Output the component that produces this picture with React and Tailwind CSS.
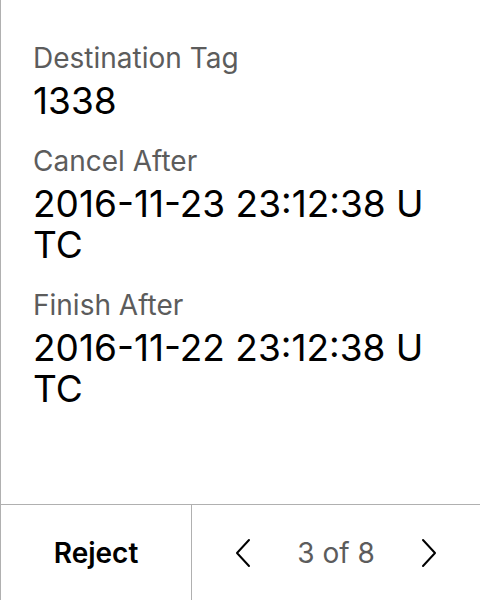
const fields = [
  { label: 'Destination Tag', value: '1338' },
  { label: 'Cancel After', value: '2016-11-23 23:12:38 UTC' },
  { label: 'Finish After', value: '2016-11-22 23:12:38 UTC' },
];

function Chevron({ dir }) {
  return (
    <svg width="18" height="32" viewBox="0 0 18 32" fill="none" stroke="#000" strokeWidth="2" strokeLinecap="round" strokeLinejoin="round">
      {dir === 'left' ? <path d="M15 3 L3 16 L15 29" /> : <path d="M3 3 L15 16 L3 29" />}
    </svg>
  );
}

export default function App() {
  return (
    <div className="flex h-[600px] w-[480px] flex-col border-l border-[#b0b0b0] bg-white font-['Inter',sans-serif]">
      <div className="flex-1 pl-8 pr-10 pt-[42px]">
        {fields.map((f) => (
          <div key={f.label} className="mb-[24px]">
            <div className="text-[28px] leading-[32px] text-[#5c5c5c]">{f.label}</div>
            <div className="mt-[6px] break-all text-[37px] leading-[41px] text-black">{f.value}</div>
          </div>
        ))}
      </div>
      <div className="flex h-[96px] border-t border-[#b0b0b0]">
        <button className="flex w-[191px] items-center justify-center border-r border-[#b0b0b0] text-[28px] font-semibold text-black">
          Reject
        </button>
        <div className="flex flex-1 items-center justify-between px-[42px]">
          <Chevron dir="left" />
          <span className="text-[28px] text-[#5c5c5c]">3 of 8</span>
          <Chevron dir="right" />
        </div>
      </div>
    </div>
  );
}
